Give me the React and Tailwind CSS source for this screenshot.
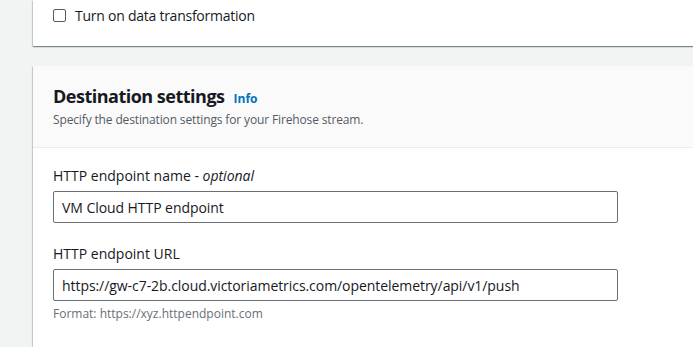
import React from "react";

const font = { fontFamily: '"Open Sans", "Noto Sans", Arial, sans-serif' };

function Field({ label, optional, value, hint }) {
    return (
        <div className="flex flex-col">
            <label className="text-[14px] leading-[22px] text-[#16191f]">
                {label}
                {optional && (
                    <>
                        {" - "}
                        <i>optional</i>
                    </>
                )}
            </label>
            <div className="mt-[4px] w-[565px] h-[32px] border border-[#687078] rounded-[2px] bg-white flex items-center px-[8px] text-[14px] tracking-[-0.06px] text-[#16191f]">
                {value}
            </div>
            {hint && <p className="mt-[5px] text-[12px] leading-[16px] text-[#687078]">{hint}</p>}
        </div>
    );
}

export default function App() {
    return (
        <div style={font} className="w-[693px] h-[347px] overflow-hidden bg-[#f2f3f3] pl-[33px]">
            <div className="w-[700px] h-[46px] bg-white shadow-[0_1px_1px_0_rgba(0,28,36,0.3),1px_1px_1px_0_rgba(0,28,36,0.15),-1px_1px_1px_0_rgba(0,28,36,0.15)] flex items-start pl-[20px] pt-[5px]">
                <label className="flex items-center gap-[9px] text-[14px] tracking-[-0.25px] text-[#16191f]">
                    <span className="w-[13px] h-[13px] border border-[#545b64] rounded-[2px] bg-white" />
                    Turn on data transformation
                </label>
            </div>

            <div className="mt-[20px] w-[700px] h-[300px] bg-white shadow-[0_1px_1px_0_rgba(0,28,36,0.3),1px_1px_1px_0_rgba(0,28,36,0.15),-1px_1px_1px_0_rgba(0,28,36,0.15)]">
                <div className="h-[82px] bg-[#fafafa] border-b border-[#eaeded] px-[20px] pt-[18px]">
                    <div className="flex items-baseline gap-[9px]">
                        <h2 className="text-[18px] leading-[24px] font-bold tracking-[-0.5px] text-[#16191f]">Destination settings</h2>
                        <a className="text-[12px] font-bold text-[#0073bb]">Info</a>
                    </div>
                    <p className="mt-[4px] text-[12px] leading-[16px] tracking-[-0.14px] text-[#545b64]">
                        Specify the destination settings for your Firehose stream.
                    </p>
                </div>
                <div className="px-[20px] pt-[17px] flex flex-col gap-[20px]">
                    <Field label="HTTP endpoint name" optional value="VM Cloud HTTP endpoint" />
                    <Field
                        label="HTTP endpoint URL"
                        value="https://gw-c7-2b.cloud.victoriametrics.com/opentelemetry/api/v1/push"
                        hint="Format: https://xyz.httpendpoint.com"
                    />
                </div>
            </div>
        </div>
    );
}
